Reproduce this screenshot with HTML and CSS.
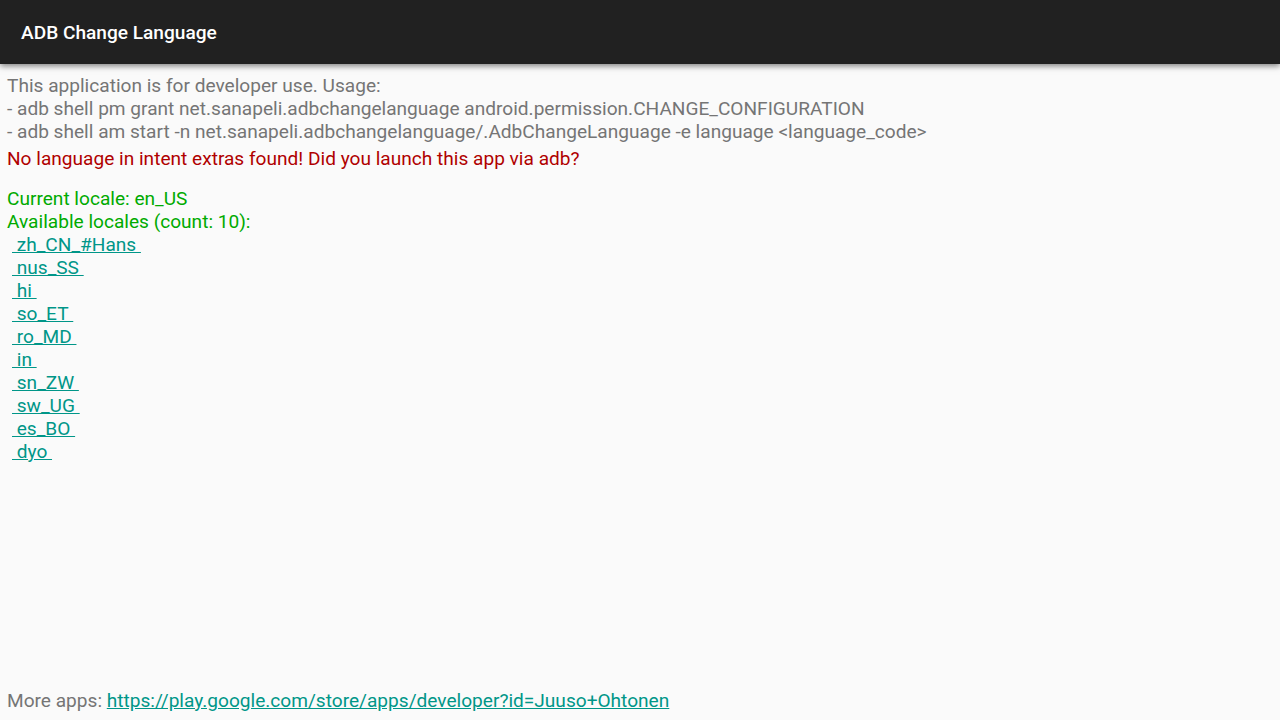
FILE: index.html
```html
<!DOCTYPE html>
<html lang="en">
<head>
  <meta charset="UTF-8">
  <title>ADB Change Language</title>
  <link rel="stylesheet" href="styles.css">
</head>
<body>
  <div class="toolbar">
    <span class="toolbar-title">ADB Change Language</span>
  </div>

  <div class="content">
    <div class="usage">
      This application is for developer use. Usage:<br>
      - adb shell pm grant net.sanapeli.adbchangelanguage android.permission.CHANGE_CONFIGURATION<br>
      - adb shell am start -n net.sanapeli.adbchangelanguage/.AdbChangeLanguage -e language &lt;language_code&gt;
    </div>
    <div class="error">No language in intent extras found! Did you launch this app via adb?</div>

    <div class="locale-info">
      Current locale: en_US<br>
      Available locales (count: 10):
    </div>
    <div class="locale-list">
      <a href="#">&nbsp;zh_CN_#Hans&nbsp;</a>
      <a href="#">&nbsp;nus_SS&nbsp;</a>
      <a href="#">&nbsp;hi&nbsp;</a>
      <a href="#">&nbsp;so_ET&nbsp;</a>
      <a href="#">&nbsp;ro_MD&nbsp;</a>
      <a href="#">&nbsp;in&nbsp;</a>
      <a href="#">&nbsp;sn_ZW&nbsp;</a>
      <a href="#">&nbsp;sw_UG&nbsp;</a>
      <a href="#">&nbsp;es_BO&nbsp;</a>
      <a href="#">&nbsp;dyo&nbsp;</a>
    </div>
  </div>

  <div class="footer">
    More apps: <a href="#">https://play.google.com/store/apps/developer?id=Juuso+Ohtonen</a>
  </div>
</body>
</html>
```

FILE: styles.css
```css
/* Global */
body {
  margin: 0;
  height: 720px;
  overflow: hidden;
  background-color: #fafafa;
  font-family: Roboto, "Noto Sans", sans-serif;
  font-size: 19.1px;
  line-height: 23px;
  display: flex;
  flex-direction: column;
}

/* Action bar */
.toolbar {
  height: 64px;
  background-color: #212121;
  display: flex;
  align-items: center;
  padding-left: 21px;
  box-shadow: 0 2px 6px rgba(0, 0, 0, 0.5);
  position: relative;
  z-index: 1;
  flex-shrink: 0;
}

.toolbar-title {
  color: #ffffff;
  font-size: 19.1px;
  font-weight: 500;
}

/* Main text */
.content {
  flex: 1;
  padding: 10px 7px 0;
}

.usage {
  color: #757575;
}

.error {
  color: #b00000;
  margin-top: 4px;
}

.locale-info {
  color: #00aa00;
  margin-top: 17px;
}

.locale-list {
  display: flex;
  flex-direction: column;
  align-items: flex-start;
  padding-left: 5px;
}

a {
  color: #009688;
  text-decoration: underline;
}

.footer {
  color: #757575;
  padding: 0 7px 8px;
}
```
